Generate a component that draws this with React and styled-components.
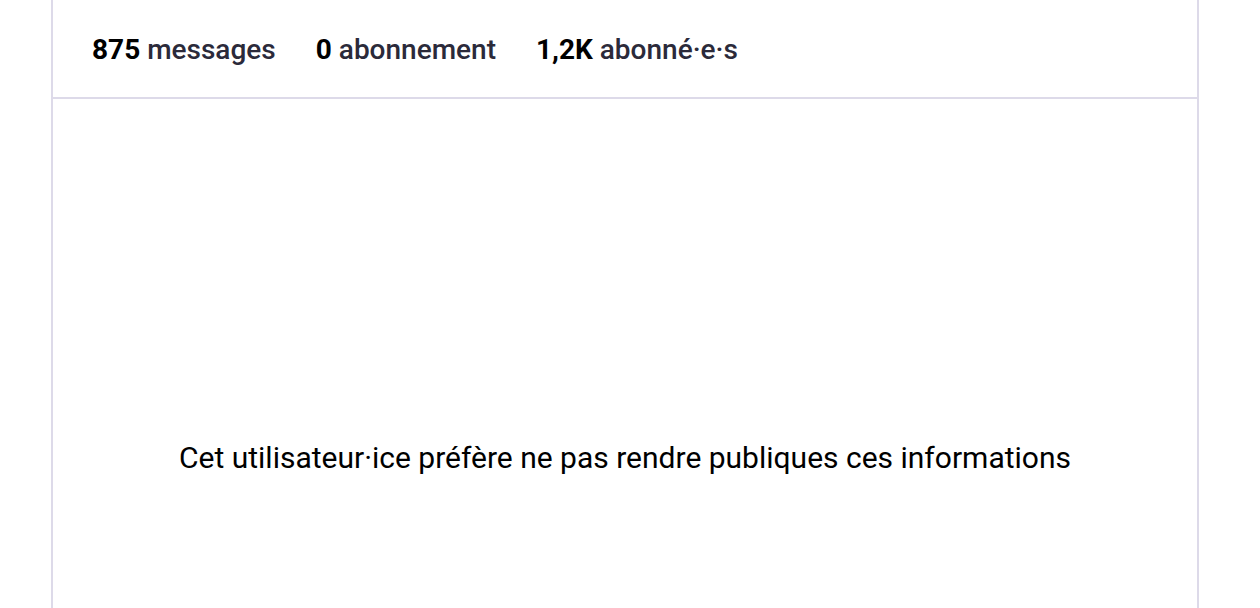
import React from "react";
import styled, { createGlobalStyle } from "styled-components";

const Global = createGlobalStyle`
  html, body { margin: 0; padding: 0; background: #fff; }
  body { font-family: Roboto, "Liberation Sans", sans-serif; }
`;

const Page = styled.div`
  display: flex;
  justify-content: center;
  padding: 0 61px 0 51px;
`;

const Card = styled.section`
  flex: 1;
  border-left: 2px solid #dddae9;
  border-right: 2px solid #dddae9;
  min-height: 700px;
`;

const Stats = styled.div`
  display: flex;
  align-items: center;
  gap: 40px;
  height: 99px;
  padding: 2px 39px 0;
  border-bottom: 2px solid #dddae9;
  box-sizing: border-box;
`;

const Stat = styled.div`
  font-size: 28px;
  color: #2b2a3a;
  font-weight: 500;
  b { color: #000; font-weight: 700; }
`;

const Empty = styled.p`
  margin: 0;
  padding-top: 341px;
  text-align: center;
  font-size: 30px;
  color: #000;
`;

export default function App() {
  return (
    <>
      <Global />
      <Page>
        <Card>
          <Stats>
            <Stat><b>875</b> messages</Stat>
            <Stat><b>0</b> abonnement</Stat>
            <Stat><b>1,2K</b> abonné·e·s</Stat>
          </Stats>
          <Empty>Cet utilisateur·ice préfère ne pas rendre publiques ces informations</Empty>
        </Card>
      </Page>
    </>
  );
}
